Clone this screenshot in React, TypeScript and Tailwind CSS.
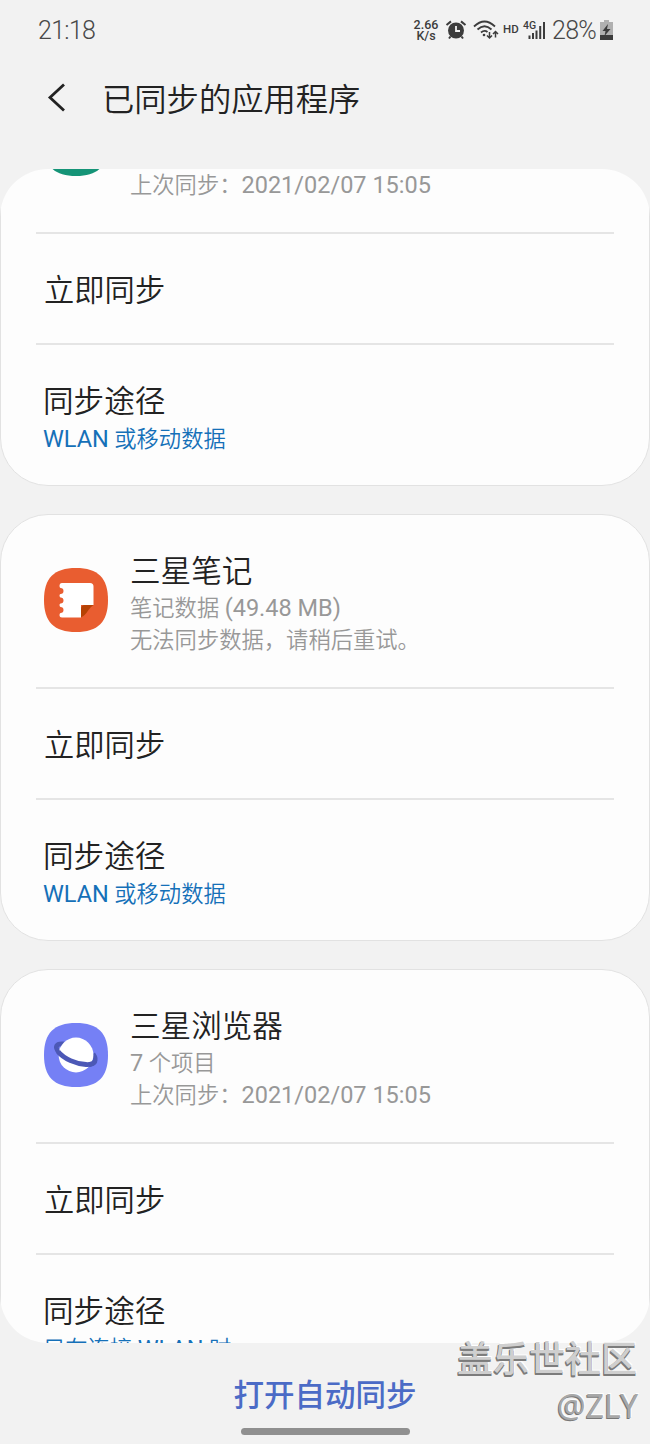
import type { ReactNode } from 'react';

function StatusBar() {
  return (
    <div className="flex h-[62px] shrink-0 items-center justify-between pl-[38px] pr-[37px] text-[#484848]">
      <span className="text-[25px] font-[350] leading-[30px] tracking-[-0.7px]">21:18</span>
      <div className="flex items-center">
        <div className="-mt-[2px] w-[26px] whitespace-nowrap text-center text-[12.500px] font-medium leading-[11px] text-[#3c3c3c]">
          <div>2.66</div>
          <div>K/s</div>
        </div>
        <svg className="-mt-[2px] ml-[6px] h-[20px] w-[22px]" viewBox="0 0 22 20" fill="none">
          <circle cx="11" cy="10.500" r="8" fill="#3c3c3c" />
          <path d="M11 6v5h4" stroke="#f2f2f2" strokeWidth="1.800" />
          <path d="M1.500 5 6 1.400M20.500 5 16 1.400M5.500 16.500 4 18.500M16.500 16.500 18 18.500" stroke="#3c3c3c" strokeWidth="2" />
        </svg>
        <svg className="-mt-[2px] ml-[6px] h-[20px] w-[26px]" viewBox="0 0 26 20" fill="none" stroke="#3c3c3c">
          <path d="M1 6.500Q11.500-3.500 22 6.500M4.500 9.500Q11.500 3 18.500 9.500M8 12.500Q11.500 9.500 14.500 12" strokeWidth="1.800" />
          <circle cx="11" cy="15" r="1.300" fill="#3c3c3c" stroke="none" />
          <path d="M16.500 12v6M14 15.500l2.500 2.500 2.500-2.500M22.500 17.500v-6M20 14l2.500-2.500L25 14" strokeWidth="1.500" />
        </svg>
        <span className="-mt-[5px] ml-[4px] w-[17px] text-[11.500px] font-medium leading-[20px] text-[#3c3c3c]">HD</span>
        <div className="relative -mt-[2px] ml-[3px] h-[20px] w-[23px] text-[#3c3c3c]">
          <span className="absolute left-0 top-0 text-[10.500px] font-medium leading-[12px]">4G</span>
          <svg className="ml-px h-[20px] w-[22px]" viewBox="0 0 22 20" fill="currentColor">
            <path d="M4.500 15.500h2V19h-2zM8 13h2v6H8zM11.500 10.500h2V19h-2zM15.200 6h2v13h-2zM19 2h2v17h-2z" />
          </svg>
        </div>
        <span className="ml-[6px] w-[45px] text-[25px] font-[350] leading-[30px] tracking-[-0.700px]">28%</span>
        <svg className="-mt-[2px] ml-[3px] h-[20px] w-[13px]" viewBox="0 0 13 20">
          <path d="M4 0h5v2h4v18H0V2h4z" fill="#b0b0b0" />
          <path d="M0 15h13v5H0z" fill="#3c3c3c" />
          <path d="M8 4 2.500 11h3L4.500 16 10.500 9H7z" fill="#3c3c3c" />
        </svg>
      </div>
    </div>
  );
}

function Tile({ fill, children }: { fill: string; children?: ReactNode }) {
  return (
    <svg className="h-[64px] w-[64px]" viewBox="0 0 64 64">
      <path d="M32 0C54 0 64 10 64 32S54 64 32 64 0 54 0 32 10 0 32 0Z" fill={fill} />
      {children}
    </svg>
  );
}

function ContactsIcon() {
  return (
    <div className="-mt-px">
      <Tile fill="#159477" />
    </div>
  );
}

function NotesIcon() {
  return (
    <Tile fill="#e95d30">
      <path
        d="M18 15H46Q49.500 15 49.500 18.500V37L37 49.500H18Q15.500 49.500 15.500 47Q15.500 45.500 16.500 45A2.800 2.800 0 0 0 16.500 39Q15.500 38.500 15.500 37T16.500 35.500A2.800 2.800 0 0 0 16.500 29.500Q15.500 29 15.500 27.500T16.500 26A2.800 2.800 0 0 0 16.500 20Q15.500 19.500 15.500 18Q15.500 15 18 15Z"
        fill="#fff"
      />
      <path d="M37 37H50V50H37Z" fill="#e95d30" />
      <path d="M37 49.500V41Q37 37 41 37H49.500Q47 38.500 44.500 42Q41 47.500 37 49.500Z" fill="#b64204" />
    </Tile>
  );
}

function BrowserIcon() {
  return (
    <Tile fill="#7580f5">
      <path d="M20 21C12 20 10 24 15.500 30C21 36 32 41 42 41.500C50 42 54 38 49 31" fill="none" stroke="#4c58b6" strokeWidth="4.800" />
      <circle cx="32" cy="32" r="17.400" fill="#fff" />
      <path d="M14 28.500C20 36 32 41 42 41.500C46.500 41.700 50 40.500 51 38" fill="none" stroke="#4c58b6" strokeWidth="4.800" />
    </Tile>
  );
}

/** Sets Latin runs slightly larger than the Chinese text around them. */
function Mixed({ text }: { text: string }) {
  return (
    <>
      {text.split(/([\x21-\x7e][\x20-\x7e]*[\x21-\x7e]|[\x21-\x7e])/).map((run, i) =>
        i % 2 ? (
          <span key={i} className="text-[23.500px] font-normal">
            {run}
          </span>
        ) : (
          run
        ),
      )}
    </>
  );
}

interface CardProps {
  icon: ReactNode;
  name: string;
  detail: string;
  status: string;
  route: string;
}

function SyncCard({ icon, name, detail, status, route }: CardProps) {
  return (
    <section className="h-[427px] w-full shrink-0 rounded-[48px] border border-[#e2e2e2] bg-[#fdfdfd] px-[35px] font-[350]">
      <div className="flex h-[174px] gap-[23px] border-b-2 border-[#e5e5e5] pl-[8px] pt-[36px]">
        <div className="pt-[17px]">{icon}</div>
        <div className="-ml-px">
          <h2 className="text-[30.600px] leading-[42px] text-[#222]">{name}</h2>
          <p className="-mt-px h-[32px] whitespace-nowrap text-[22.300px] leading-[32px] text-[#989898]">
            <Mixed text={detail} />
          </p>
          <p className="h-[32px] whitespace-nowrap text-[22.300px] leading-[32px] text-[#989898]">
            <Mixed text={status} />
          </p>
        </div>
      </div>
      <div className="flex h-[111px] items-center border-b-2 border-[#e5e5e5] pl-[8px] pt-[4px] text-[30.300px] text-[#222]">立即同步</div>
      <div className="pl-[7px] pt-[36px]">
        <div className="text-[30.600px] leading-[42px] text-[#222]">同步途径</div>
        <div className="whitespace-nowrap text-[22.300px] leading-[32px] text-[#1570b8]">
          <Mixed text={route} />
        </div>
      </div>
    </section>
  );
}

export default function App() {
  return (
    <main className="relative flex h-[1444px] w-[650px] flex-col overflow-hidden bg-[#f2f2f2] font-['Roboto','Noto_Sans_CJK_SC',sans-serif]">
      <StatusBar />
      <header className="flex h-[107px] shrink-0 items-start pl-[47px] pt-[13px]">
        <svg className="mt-[8px] h-[29px] w-[20px]" viewBox="0 0 20 29" fill="none">
          <path d="M17 1.500 3 14.500 17 27.500" stroke="#222" strokeWidth="2.800" />
        </svg>
        <h1 className="ml-[35px] text-[32.300px] font-[350] leading-[50px] text-[#222]">已同步的应用程序</h1>
      </header>
      <div className="h-[1174px] shrink-0 overflow-hidden rounded-[48px]">
        <div className="-mt-[110px] flex flex-col gap-[28px]">
          <SyncCard
            icon={<ContactsIcon />}
            name="三星云"
            detail="1 个项目"
            status="上次同步：2021/02/07 15:05"
            route="WLAN 或移动数据"
          />
          <SyncCard
            icon={<NotesIcon />}
            name="三星笔记"
            detail="笔记数据 (49.48 MB)"
            status="无法同步数据，请稍后重试。"
            route="WLAN 或移动数据"
          />
          <SyncCard
            icon={<BrowserIcon />}
            name="三星浏览器"
            detail="7 个项目"
            status="上次同步：2021/02/07 15:05"
            route="只在连接 WLAN 时"
          />
        </div>
      </div>
      <footer className="flex flex-1 flex-col items-center pt-[32px]">
        <button className="text-[30.500px] font-medium leading-[42px] text-[#4b6bc6]">打开自动同步</button>
        <div className="mt-[11px] h-[7px] w-[169px] rounded-full bg-[#909090]" />
      </footer>
      <div className="pointer-events-none absolute right-[12px] top-[1334px] text-right font-['Noto_Sans','Noto_Sans_CJK_SC',sans-serif]">
        <div className="pr-px text-[36px] font-medium leading-[50px] text-[#cfcfcf] [text-shadow:-1px_1px_0_#7c7c7c,0_2px_0_#7c7c7c,-1px_2px_0_#7c7c7c,1px_-1px_0_#fff]">盖乐世社区</div>
        <div className="text-[32px] leading-[44px] text-[#a8a8a8] [text-shadow:-1px_1px_0_#777,1px_-1px_0_#fff]">@ZLY</div>
      </div>
    </main>
  );
}
